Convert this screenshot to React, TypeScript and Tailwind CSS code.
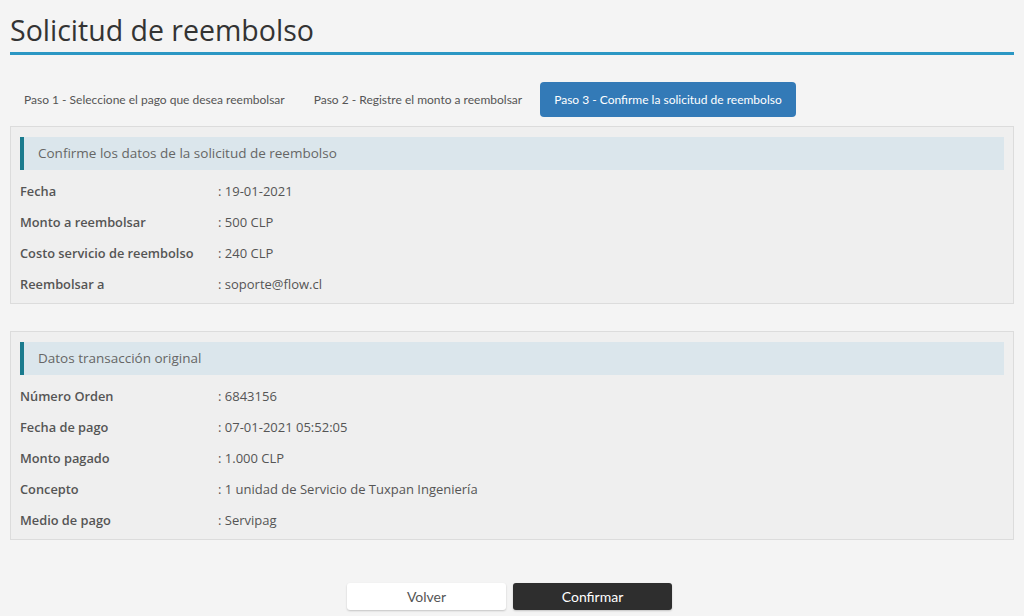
import React from 'react';

const refundRows = [
  { label: 'Fecha', value: ': 19-01-2021' },
  { label: 'Monto a reembolsar', value: ': 500 CLP' },
  { label: 'Costo servicio de reembolso', value: ': 240 CLP' },
  { label: 'Reembolsar a', value: ': soporte@flow.cl' },
];

const originalRows = [
  { label: 'Número Orden', value: ': 6843156' },
  { label: 'Fecha de pago', value: ': 07-01-2021 05:52:05' },
  { label: 'Monto pagado', value: ': 1.000 CLP' },
  { label: 'Concepto', value: ': 1 unidad de Servicio de Tuxpan Ingeniería' },
  { label: 'Medio de pago', value: ': Servipag' },
];

const steps = [
  'Paso 1 - Seleccione el pago que desea reembolsar',
  'Paso 2 - Registre el monto a reembolsar',
  'Paso 3 - Confirme la solicitud de reembolso',
];

function Panel({ title, rows }: { title: string; rows: { label: string; value: string }[] }) {
  return (
    <div className="border border-[#dcdcdc] bg-[#efefef] px-[9px] pt-[10px] pb-[3px]">
      <div className="h-[33px] flex items-center bg-[#dbe6ec] border-l-4 border-[#1a7b8e] pl-[14px] text-[13.5px] text-[#666]">
        {title}
      </div>
      <div className="mt-[6px]">
        {rows.map(r => (
          <div key={r.label} className="h-[31px] flex items-baseline leading-[31px] text-[13px]">
            <span className="w-[198px] font-semibold text-[12.8px] text-[#555]">{r.label}</span>
            <span className="text-[#555]">{r.value}</span>
          </div>
        ))}
      </div>
    </div>
  );
}

export default function App() {
  return (
    <div className="min-h-[616px] bg-[#f4f4f4] px-[10px] pt-[11px] font-['Open_Sans',sans-serif]">
      {/* Header */}
      <h1 className="text-[28.5px] text-[#333] leading-[38px] pb-[3px] border-b-[3px] border-[#2b97c4]">
        Solicitud de reembolso
      </h1>

      {/* Steps */}
      <div className="flex gap-px mt-[27px] font-['Lato',sans-serif] text-[12px]">
        {steps.map((s, i) => (
          <div
            key={s}
            className={`h-[35px] flex items-center px-[14px] rounded ${
              i === 2 ? 'bg-[#337ab7] text-white ml-[3px]' : 'text-[#555]'
            }`}
          >
            {s}
          </div>
        ))}
      </div>

      <div className="mt-[9px]">
        <Panel title="Confirme los datos de la solicitud de reembolso" rows={refundRows} />
      </div>
      <div className="mt-[27px]">
        <Panel title="Datos transacción original" rows={originalRows} />
      </div>

      {/* Actions */}
      <div className="flex justify-center gap-[7px] mt-[43px] font-['Lato',sans-serif] text-[14px] pr-[5px]">
        <button className="w-[159px] h-[27px] bg-white text-[#555] rounded-[3px] shadow-[0_1px_2px_rgba(0,0,0,0.2)]">
          Volver
        </button>
        <button className="w-[159px] h-[27px] bg-[#2e2e2e] text-white rounded-[3px] shadow-[0_1px_2px_rgba(0,0,0,0.2)]">
          Confirmar
        </button>
      </div>
    </div>
  );
}
